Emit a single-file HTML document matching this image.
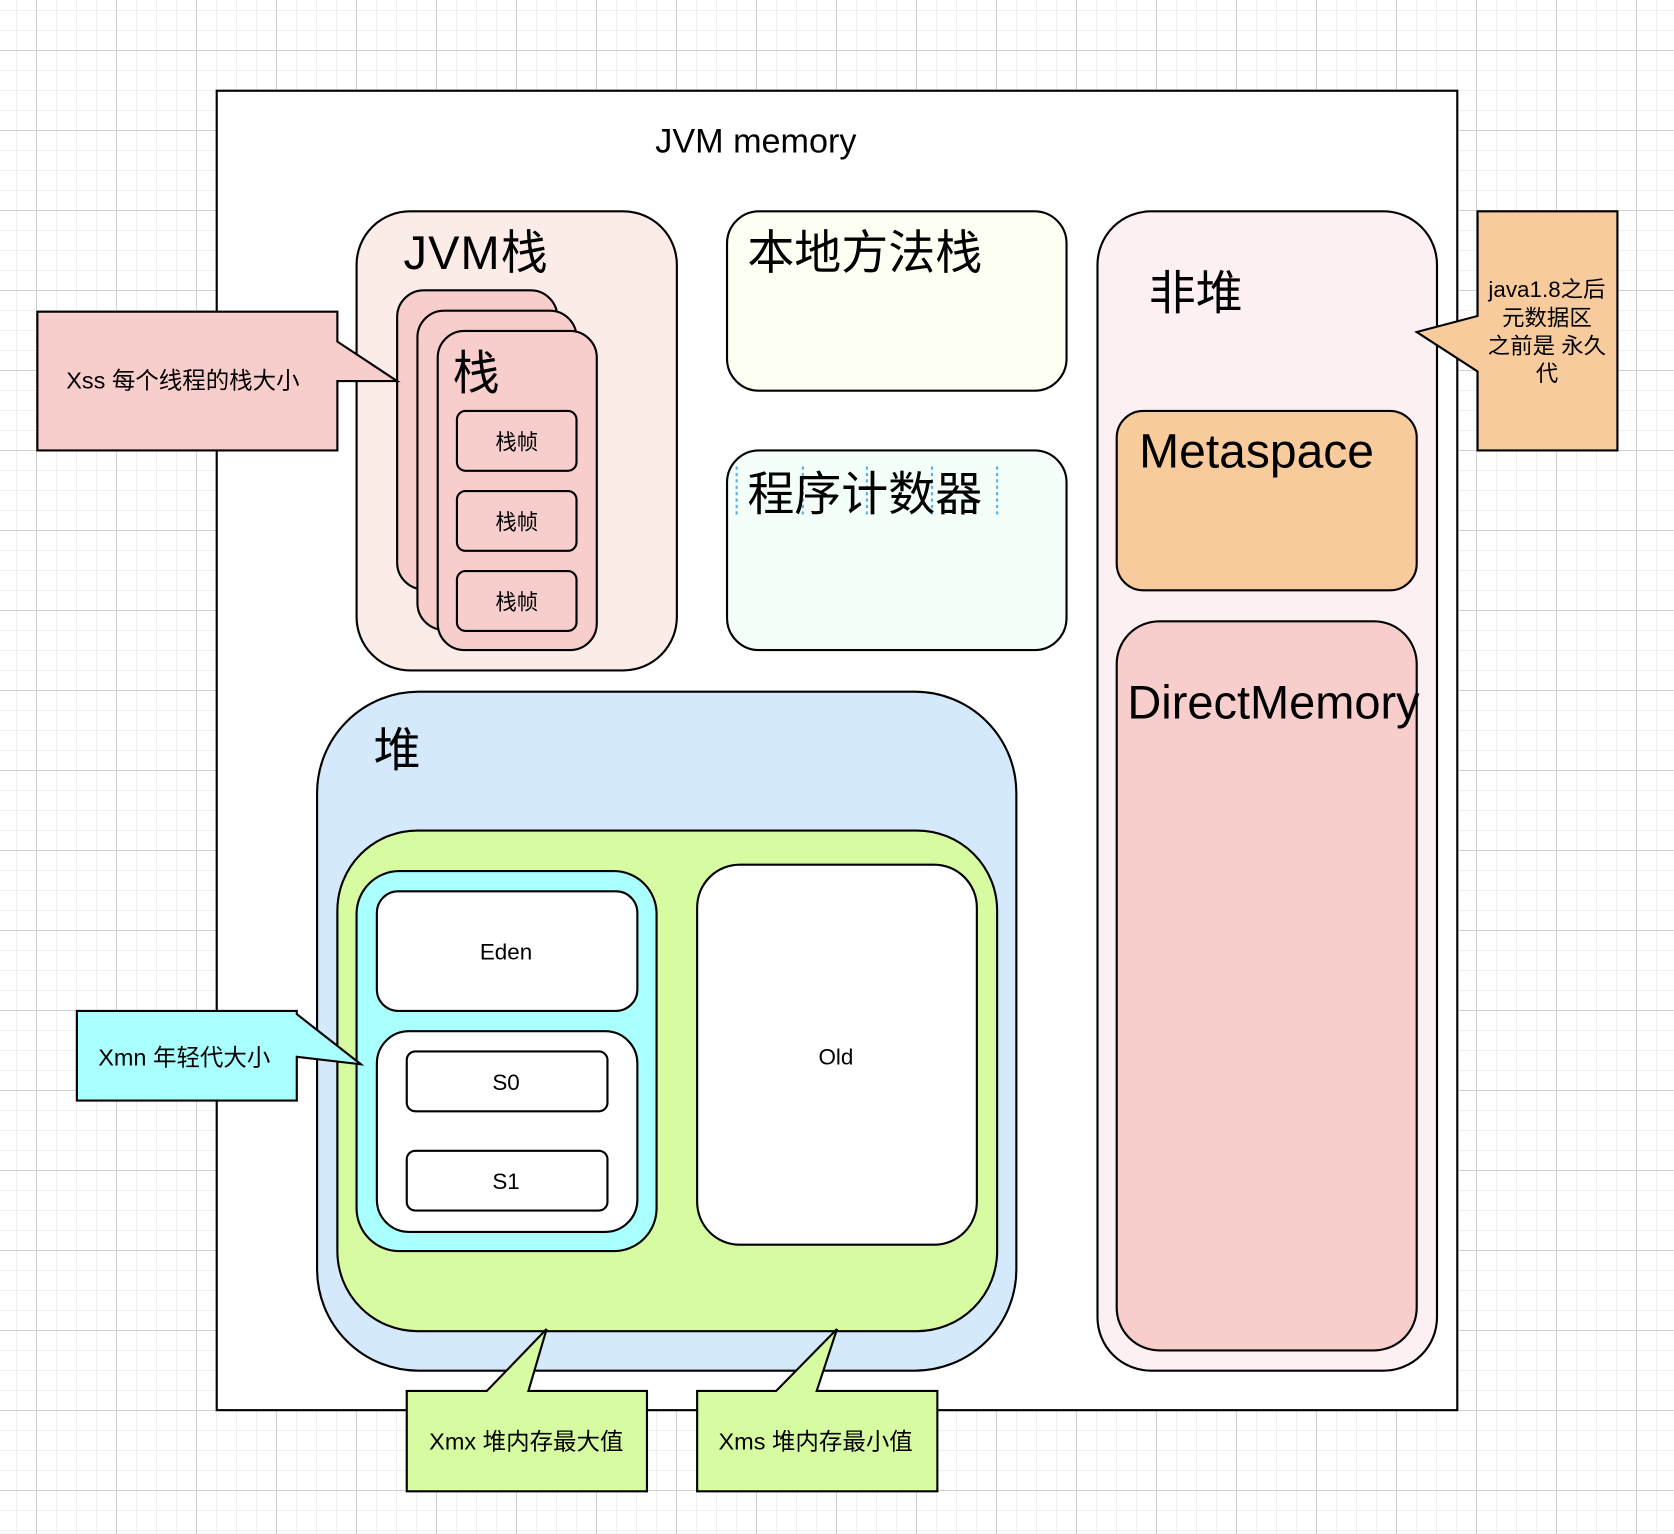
<!DOCTYPE html>
<html><head><meta charset="utf-8"><style>
html,body{margin:0;padding:0;width:1674px;height:1534px;overflow:hidden;background-color:#fff;
background-image:
linear-gradient(to right,#d0d0d0 1px,transparent 1px),
linear-gradient(to bottom,#d0d0d0 1px,transparent 1px),
linear-gradient(to right,#efefef 1px,transparent 1px),
linear-gradient(to bottom,#efefef 1px,transparent 1px);
background-size:80px 80px,80px 80px,20px 20px,20px 20px;
background-position:36px 0,0 50px,16px 0,0 10px;}
svg{position:absolute;left:0;top:0}
text{font-family:"Liberation Sans","Noto Sans CJK SC",sans-serif;fill:#000}
</style></head><body>
<svg width="1674" height="1534" viewBox="0 0 1568 1437" preserveAspectRatio="none">
<g stroke="#000" stroke-width="2">
<rect x="203" y="85" width="1162" height="1236" fill="#fff"/>
<rect x="334" y="198" width="300" height="430" rx="50" fill="#fbece7"/>
<rect x="372" y="272" width="150" height="280" rx="25" fill="#f8cecc"/>
<rect x="391" y="291" width="149" height="299" rx="25" fill="#f8cecc"/>
<rect x="410" y="310" width="149" height="299" rx="25" fill="#f8cecc"/>
<rect x="428" y="385" width="112" height="56" rx="8" fill="#f8cecc"/>
<rect x="428" y="460" width="112" height="56" rx="8" fill="#f8cecc"/>
<rect x="428" y="535" width="112" height="56" rx="8" fill="#f8cecc"/>
<rect x="681" y="198" width="318" height="168" rx="30" fill="#fdfff2"/>
<rect x="681" y="422" width="318" height="187" rx="30" fill="#f5fffa"/>
<rect x="1028" y="198" width="318" height="1086" rx="50" fill="#fdf0f3"/>
<rect x="1046" y="385" width="281" height="168" rx="25" fill="#f8cb9c"/>
<rect x="1046" y="582" width="281" height="683" rx="40" fill="#f8cecc"/>
<path d="M1384 198H1515V422H1384V348L1327 311L1384 296Z" fill="#f8cb9c"/>
<path d="M35 292H316V320L372 357L316 357V422H35Z" fill="#f8cecc"/>
<rect x="297" y="648" width="655" height="636" rx="95" fill="#d4eafc"/>
<rect x="316" y="778" width="618" height="469" rx="75" fill="#d7fba0"/>
<rect x="334" y="816" width="281" height="356" rx="40" fill="#aaffff"/>
<rect x="353" y="835" width="244" height="112" rx="20" fill="#fff"/>
<rect x="353" y="966" width="244" height="188" rx="30" fill="#fff"/>
<rect x="381" y="985" width="188" height="56" rx="8" fill="#fff"/>
<rect x="381" y="1078" width="188" height="56" rx="8" fill="#fff"/>
<rect x="653" y="810" width="262" height="356" rx="40" fill="#fff"/>
<path d="M72 947H278V950L338 997L278 990V1031H72Z" fill="#aaffff"/>
<path d="M381 1303H456L512 1245L495 1303H606V1397H381Z" fill="#d7fba0"/>
<path d="M653 1303H727L784 1245L765 1303H878V1397H653Z" fill="#d7fba0"/>
</g>
<g stroke="#5ab0e8" stroke-width="2" stroke-dasharray="3 3">
<line x1="690" y1="437" x2="690" y2="483"/><line x1="752" y1="437" x2="752" y2="483"/>
<line x1="812" y1="437" x2="812" y2="483"/><line x1="873" y1="437" x2="873" y2="483"/>
<line x1="934" y1="437" x2="934" y2="483"/>
</g>
<text x="708" y="143" font-size="32" text-anchor="middle">JVM memory</text>
<text x="378" y="252" font-size="44" letter-spacing="1">JVM栈</text>
<text x="424" y="365" font-size="44">栈</text>
<text x="484" y="421" font-size="20" text-anchor="middle">栈帧</text>
<text x="484" y="496" font-size="20" text-anchor="middle">栈帧</text>
<text x="484" y="571" font-size="20" text-anchor="middle">栈帧</text>
<text x="700" y="252" font-size="44">本地方法栈</text>
<text x="700" y="478" font-size="44">程序计数器</text>
<text x="1076" y="290" font-size="44">非堆</text>
<text x="1067" y="438" font-size="45">Metaspace</text>
<text x="1056" y="673" font-size="44">DirectMemory</text>
<text x="1449" y="278" font-size="21" text-anchor="middle">java1.8之后</text>
<text x="1449" y="305" font-size="21" text-anchor="middle">元数据区</text>
<text x="1449" y="331" font-size="21" text-anchor="middle">之前是 永久</text>
<text x="1449" y="357" font-size="21" text-anchor="middle">代</text>
<text x="62" y="364" font-size="22">Xss 每个线程的栈大小</text>
<text x="350" y="718" font-size="44">堆</text>
<text x="474" y="899" font-size="21" text-anchor="middle">Eden</text>
<text x="474" y="1021" font-size="21" text-anchor="middle">S0</text>
<text x="474" y="1114" font-size="21" text-anchor="middle">S1</text>
<text x="783" y="997" font-size="21" text-anchor="middle">Old</text>
<text x="92" y="998" font-size="22">Xmn 年轻代大小</text>
<text x="493" y="1358" font-size="22" text-anchor="middle">Xmx 堆内存最大值</text>
<text x="764" y="1358" font-size="22" text-anchor="middle">Xms 堆内存最小值</text>
</svg>
</body></html>
